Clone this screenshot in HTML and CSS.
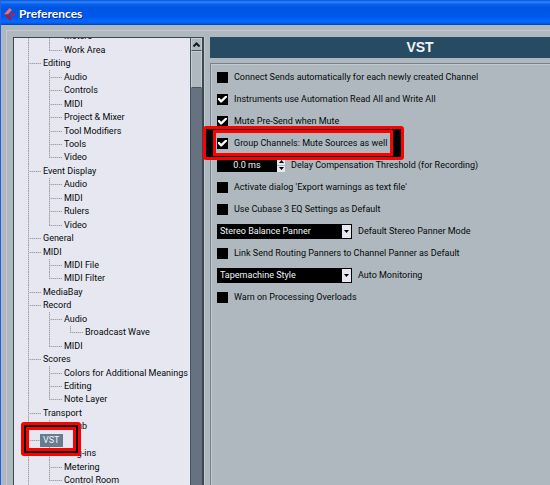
FILE: index.html
```html
<!DOCTYPE html>
<html lang="en">
<head>
<meta charset="utf-8">
<title>Preferences</title>
<link rel="stylesheet" href="styles.css">
</head>
<body>
<div class="window">
  <header class="titlebar">
    <svg class="logo" width="12" height="13" viewBox="0 0 12 13" aria-hidden="true">
      <path d="M5.500 0 L8 2 L4 6.300 L8 10.700 L6 12.700 L0 6.300 Z" fill="#a81c38"/>
      <path d="M5.500 0 L8 2 L4 6.300 L0 6.300 Z" fill="#dc7a84"/>
      <path d="M9 4.200 L11.500 6.500 L9 8.800 L6.700 6.500 Z" fill="#c02038"/>
    </svg>
    <h1>Preferences</h1>
  </header>
  <div class="body">
    <nav class="tree" aria-label="Preference pages">
      <ul class="pages">
        <li><i class="line"></i><i class="tee"></i><a href="#">Meters</a></li>
        <li><i class="line"></i><i class="end"></i><a href="#">Work Area</a></li>
        <li><i class="tee"></i><a href="#">Editing</a></li>
        <li><i class="line"></i><i class="tee"></i><a href="#">Audio</a></li>
        <li><i class="line"></i><i class="tee"></i><a href="#">Controls</a></li>
        <li><i class="line"></i><i class="tee"></i><a href="#">MIDI</a></li>
        <li><i class="line"></i><i class="tee"></i><a href="#">Project &amp; Mixer</a></li>
        <li><i class="line"></i><i class="tee"></i><a href="#">Tool Modifiers</a></li>
        <li><i class="line"></i><i class="tee"></i><a href="#">Tools</a></li>
        <li><i class="line"></i><i class="end"></i><a href="#">Video</a></li>
        <li><i class="tee"></i><a href="#">Event Display</a></li>
        <li><i class="line"></i><i class="tee"></i><a href="#">Audio</a></li>
        <li><i class="line"></i><i class="tee"></i><a href="#">MIDI</a></li>
        <li><i class="line"></i><i class="tee"></i><a href="#">Rulers</a></li>
        <li><i class="line"></i><i class="end"></i><a href="#">Video</a></li>
        <li><i class="tee"></i><a href="#">General</a></li>
        <li><i class="tee"></i><a href="#">MIDI</a></li>
        <li><i class="line"></i><i class="tee"></i><a href="#">MIDI File</a></li>
        <li><i class="line"></i><i class="end"></i><a href="#">MIDI Filter</a></li>
        <li><i class="tee"></i><a href="#">MediaBay</a></li>
        <li><i class="tee"></i><a href="#">Record</a></li>
        <li><i class="line"></i><i class="tee"></i><a href="#">Audio</a></li>
        <li><i class="line"></i><i class="line"></i><i class="end"></i><a href="#">Broadcast Wave</a></li>
        <li><i class="line"></i><i class="end"></i><a href="#">MIDI</a></li>
        <li><i class="tee"></i><a href="#">Scores</a></li>
        <li><i class="line"></i><i class="tee"></i><a href="#">Colors for Additional Meanings</a></li>
        <li><i class="line"></i><i class="tee"></i><a href="#">Editing</a></li>
        <li><i class="line"></i><i class="end"></i><a href="#">Note Layer</a></li>
        <li><i class="tee"></i><a href="#">Transport</a></li>
        <li><i class="line"></i><i class="end"></i><a href="#">Scrub</a></li>
        <li class="marked"><i class="tee"></i><a href="#" class="selected" aria-current="page">VST</a><span class="marker marker-page"></span></li>
        <li><i class="line"></i><i class="tee"></i><a href="#">Plug-ins</a></li>
        <li><i class="line"></i><i class="tee"></i><a href="#">Metering</a></li>
        <li><i class="line"></i><i class="end"></i><a href="#">Control Room</a></li>
      </ul>
      <div class="scrollbar">
        <button class="scroll-up" type="button" aria-label="Scroll up">
          <svg width="7" height="5" viewBox="0 0 7 5"><path d="M0.500 4.500 L3.500 1.500 L6.500 4.500" fill="none" stroke="#101820" stroke-width="2"/></svg>
        </button>
        <div class="thumb"></div>
      </div>
    </nav>
    <main class="page">
      <h2>VST</h2>
      <form class="options">
        <div class="row"><label><input type="checkbox">Connect Sends automatically for each newly created Channel</label></div>
        <div class="row"><label><input type="checkbox" checked>Instruments use Automation Read All and Write All</label></div>
        <div class="row"><label><input type="checkbox" checked>Mute Pre-Send when Mute</label></div>
        <div class="row marked"><label><input type="checkbox" checked>Group Channels: Mute Sources as well</label><span class="marker marker-option"></span></div>
        <div class="row">
          <span class="stepper">
            <input id="delay" type="text" value="0.0 ms">
            <span class="steps">
              <button type="button" aria-label="Increase"><svg width="5" height="3" viewBox="0 0 5 3"><path d="M0 3 L2.500 0 L5 3 Z"/></svg></button>
              <button type="button" aria-label="Decrease"><svg width="5" height="3" viewBox="0 0 5 3"><path d="M0 0 L2.500 3 L5 0 Z"/></svg></button>
            </span>
          </span>
          <label for="delay">Delay Compensation Threshold (for Recording)</label>
        </div>
        <div class="row"><label><input type="checkbox">Activate dialog 'Export warnings as text file'</label></div>
        <div class="row"><label><input type="checkbox">Use Cubase 3 EQ Settings as Default</label></div>
        <div class="row">
          <span class="dropdown">
            <select id="panner"><option>Stereo Balance Panner</option></select>
            <svg width="5" height="3" viewBox="0 0 5 3"><path d="M0 0 L2.500 3 L5 0 Z"/></svg>
          </span>
          <label for="panner">Default Stereo Panner Mode</label>
        </div>
        <div class="row"><label><input type="checkbox">Link Send Routing Panners to Channel Panner as Default</label></div>
        <div class="row">
          <span class="dropdown">
            <select id="monitoring"><option>Tapemachine Style</option></select>
            <svg width="5" height="3" viewBox="0 0 5 3"><path d="M0 0 L2.500 3 L5 0 Z"/></svg>
          </span>
          <label for="monitoring">Auto Monitoring</label>
        </div>
        <div class="row"><label><input type="checkbox">Warn on Processing Overloads</label></div>
      </form>
    </main>
  </div>
</div>
</body>
</html>
```
FILE: styles.css
```css
* {
  box-sizing: border-box;
}

body {
  margin: 0;
  overflow: hidden;
  font: 9px/13px "Roboto", "Liberation Sans", sans-serif;
  color: #05080a;
}

button,
input,
select {
  margin: 0;
  padding: 0;
  border: 0;
  border-radius: 0;
  appearance: none;
  font: inherit;
}

.window {
  display: flex;
  flex-direction: column;
  height: 100vh;
  border-left: 1px solid #1f62e6;
  background: #aeb8be;
}

.titlebar {
  display: flex;
  flex: none;
  align-items: center;
  gap: 3px;
  height: 25px;
  padding: 3px 0 0 3px;
  background: linear-gradient(#0a50d8 0, #2f86fb 2px, #0a62ee 4px, #0054e2 8px, #0058ee 17px, #0568ff 21px, #0560f2 23px, #0340b4 25px);
}

.titlebar h1 {
  margin: 0;
  font: bold 12px/14px "Lato", "Liberation Sans", sans-serif;
  color: #fff;
  text-shadow: 1px 1px 0 #0a2f8c;
}

.body {
  display: flex;
  flex: 1;
  min-height: 0;
  gap: 6px;
  margin: 5px 0 0 5px;
  padding: 6px 0 0 6px;
  border-top: 1px solid #c2cacf;
  border-left: 1px solid #c2cacf;
}

.tree {
  display: flex;
  flex: none;
  width: 191px;
  overflow: hidden;
  border: solid #3b4853;
  border-width: 1px 2px 0 1px;
  background: #e6e7f0;
  box-shadow: 1px 0 0 #c2cacf;
}

/* The list is scrolled part-way through its first row. */
.pages {
  display: grid;
  flex: 1;
  grid-auto-rows: 13px 14px 13px 14px 13px 14px 13px 14px 13px;
  align-content: start;
  min-width: 0;
  margin: -8px 0 0;
  padding: 0 0 0 14px;
  list-style: none;
}

.pages li {
  display: flex;
  align-items: center;
  white-space: nowrap;
}

.pages a {
  color: inherit;
  text-decoration: none;
}

.pages i {
  --v: repeating-linear-gradient(#a2a3aa 0 1px, #c8c9d0 1px 2px);
  --h: repeating-linear-gradient(90deg, #a2a3aa 0 1px, #c8c9d0 1px 2px);
  flex: none;
  width: 15px;
  height: 100%;
  background-repeat: no-repeat;
}

.pages .line {
  width: 21px;
  background-image: var(--v);
  background-size: 1px 100%;
}

.pages .tee {
  background-image: var(--v), var(--h);
  background-size: 1px 100%, 13px 1px;
  background-position: 0 0, 0 50%;
}

.pages .end {
  background-image: var(--v), var(--h);
  background-size: 1px 50%, 13px 1px;
  background-position: 0 0, 0 50%;
}

.pages .selected {
  margin-left: -3px;
  padding: 0 4px 0 3px;
  background: #687b8f;
  color: #f2f5fa;
}

.scrollbar {
  display: flex;
  flex: none;
  flex-direction: column;
  width: 12px;
  border-left: 1px solid #46545f;
  background: #66727f;
}

.scroll-up {
  display: grid;
  place-items: center;
  height: 13px;
  border: 1px solid #c5cdd2;
  border-bottom-color: #46545f;
  background: #aeb8be;
}

.thumb {
  height: 37px;
  border: 1px solid #c5cdd2;
  border-bottom-color: #46545f;
  background: #aeb8be;
}

.page {
  display: flex;
  flex: 1;
  flex-direction: column;
  gap: 5px;
  min-width: 0;
}

.page h2 {
  margin: 0;
  padding-left: 80px;
  background: #274b62;
  color: #f2f5f7;
  font: bold 14px/21px "Liberation Sans", sans-serif;
  text-align: center;
}

.options {
  flex: 1;
  padding: 2px 0 0 6px;
  border-top: 1px solid #75818b;
  border-left: 1px solid #75818b;
  box-shadow: inset 1px 1px 0 #c2cacf;
}

.row {
  display: flex;
  align-items: center;
  gap: 6px;
  height: 22px;
  white-space: nowrap;
}

.row label {
  display: flex;
  align-items: center;
  gap: 6px;
}

input[type="checkbox"] {
  display: grid;
  place-items: center;
  width: 11px;
  height: 11px;
  background: #000;
}

input[type="checkbox"]:checked::before {
  content: "";
  width: 9px;
  height: 7px;
  background: #fff;
  clip-path: polygon(0 35%, 18% 35%, 35% 60%, 85% 0, 100% 0, 100% 25%, 42% 100%, 28% 100%, 0 60%);
}

.stepper {
  display: flex;
  height: 14px;
}

.stepper input {
  width: 60px;
  background: #000;
  color: #eef5f8;
  text-align: center;
}

.steps {
  display: grid;
  grid-template-rows: 1fr 1fr;
  gap: 1px;
  width: 8px;
}

.steps button {
  display: grid;
  place-items: center;
  background: #e6e7f0;
}

.dropdown {
  position: relative;
  display: flex;
  width: 135px;
  height: 15px;
}

.dropdown select {
  flex: 1;
  min-width: 0;
  padding: 0 12px 0 3px;
  border: 1px solid #000;
  border-width: 1px 1px 1px 0;
  background: linear-gradient(90deg, #000 0 calc(100% - 9px), #e6e7f0 calc(100% - 9px));
  color: #eef5f8;
}

.dropdown svg {
  position: absolute;
  top: 6px;
  right: 3px;
  pointer-events: none;
}

/* Double red frame over a black band, drawn around a highlighted item. */
.marked {
  position: relative;
}

.marker {
  position: absolute;
  z-index: 1;
  border: 3px solid #f00;
  border-radius: 3px;
  pointer-events: none;
}

.marker::before {
  content: "";
  position: absolute;
  inset: 0;
  border: solid #000;
}

.marker::after {
  content: "";
  position: absolute;
  border: 3px solid #f00;
}

.marker-page {
  top: -11px;
  left: -7px;
  width: 60px;
  height: 34px;
}

.marker-page::before {
  border-width: 2px;
}

.marker-page::after {
  inset: 2px;
}

.marker-option {
  top: -6px;
  left: -14px;
  width: 201px;
  height: 34px;
}

.marker-option::before {
  border-width: 1px 8px 1px 7px;
}

.marker-option::after {
  inset: 1px 8px 1px 7px;
}
```
